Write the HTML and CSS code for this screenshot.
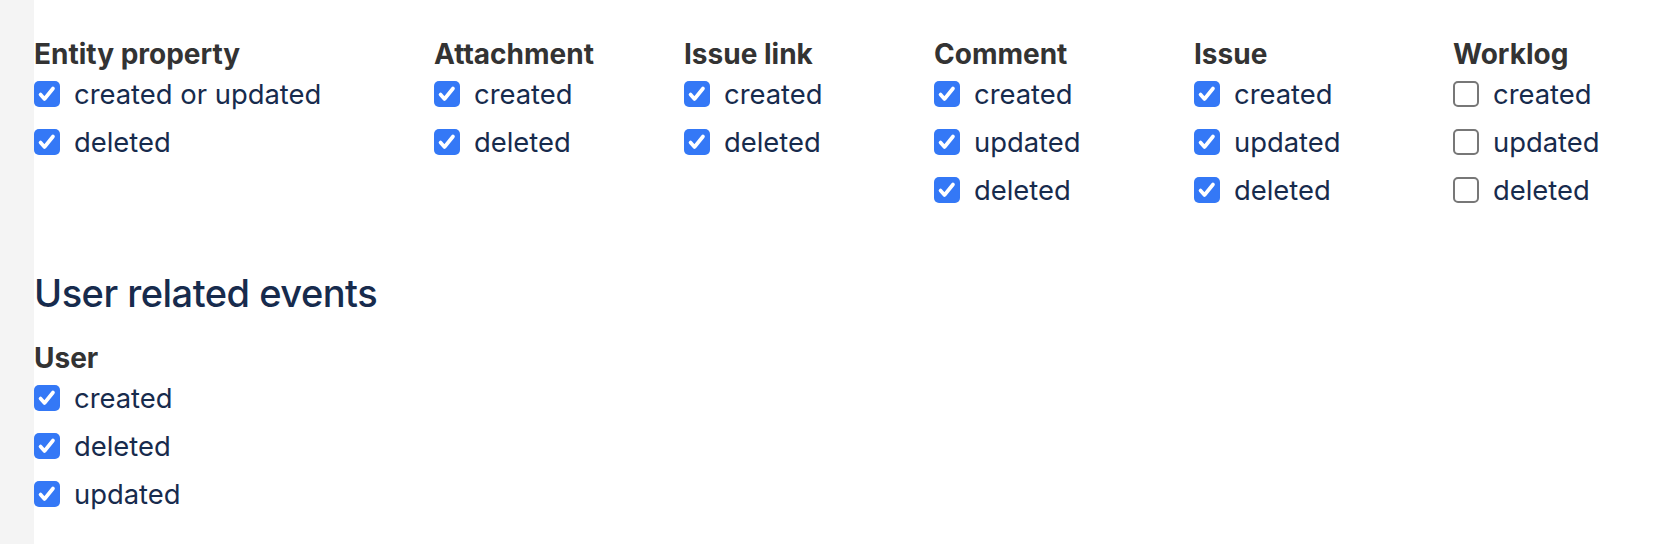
FILE: index.html
```html
<!DOCTYPE html>
<html lang="en">
<head>
<meta charset="utf-8">
<title>Webhook events</title>
<link rel="stylesheet" href="styles.css">
</head>
<body>
<div class="page">
  <aside class="rail"></aside>
  <main class="content">
    <div class="event-grid">
      <section class="group">
        <h5 class="group-title">Entity property</h5>
        <label class="opt"><span class="box on"><svg viewBox="0 0 26 26"><polyline points="6.5,13.5 10.5,18 19,7.5"/></svg></span><span class="lbl">created or updated</span></label>
        <label class="opt"><span class="box on"><svg viewBox="0 0 26 26"><polyline points="6.5,13.5 10.5,18 19,7.5"/></svg></span><span class="lbl">deleted</span></label>
      </section>
      <section class="group">
        <h5 class="group-title">Attachment</h5>
        <label class="opt"><span class="box on"><svg viewBox="0 0 26 26"><polyline points="6.5,13.5 10.5,18 19,7.5"/></svg></span><span class="lbl">created</span></label>
        <label class="opt"><span class="box on"><svg viewBox="0 0 26 26"><polyline points="6.5,13.5 10.5,18 19,7.5"/></svg></span><span class="lbl">deleted</span></label>
      </section>
      <section class="group">
        <h5 class="group-title">Issue link</h5>
        <label class="opt"><span class="box on"><svg viewBox="0 0 26 26"><polyline points="6.5,13.5 10.5,18 19,7.5"/></svg></span><span class="lbl">created</span></label>
        <label class="opt"><span class="box on"><svg viewBox="0 0 26 26"><polyline points="6.5,13.5 10.5,18 19,7.5"/></svg></span><span class="lbl">deleted</span></label>
      </section>
      <section class="group">
        <h5 class="group-title">Comment</h5>
        <label class="opt"><span class="box on"><svg viewBox="0 0 26 26"><polyline points="6.5,13.5 10.5,18 19,7.5"/></svg></span><span class="lbl">created</span></label>
        <label class="opt"><span class="box on"><svg viewBox="0 0 26 26"><polyline points="6.5,13.5 10.5,18 19,7.5"/></svg></span><span class="lbl">updated</span></label>
        <label class="opt"><span class="box on"><svg viewBox="0 0 26 26"><polyline points="6.5,13.5 10.5,18 19,7.5"/></svg></span><span class="lbl">deleted</span></label>
      </section>
      <section class="group">
        <h5 class="group-title">Issue</h5>
        <label class="opt"><span class="box on"><svg viewBox="0 0 26 26"><polyline points="6.5,13.5 10.5,18 19,7.5"/></svg></span><span class="lbl">created</span></label>
        <label class="opt"><span class="box on"><svg viewBox="0 0 26 26"><polyline points="6.5,13.5 10.5,18 19,7.5"/></svg></span><span class="lbl">updated</span></label>
        <label class="opt"><span class="box on"><svg viewBox="0 0 26 26"><polyline points="6.5,13.5 10.5,18 19,7.5"/></svg></span><span class="lbl">deleted</span></label>
      </section>
      <section class="group">
        <h5 class="group-title">Worklog</h5>
        <label class="opt"><span class="box"></span><span class="lbl">created</span></label>
        <label class="opt"><span class="box"></span><span class="lbl">updated</span></label>
        <label class="opt"><span class="box"></span><span class="lbl">deleted</span></label>
      </section>
    </div>

    <h3 class="section-title">User related events</h3>
    <section class="group">
      <h5 class="group-title">User</h5>
      <label class="opt"><span class="box on"><svg viewBox="0 0 26 26"><polyline points="6.5,13.5 10.5,18 19,7.5"/></svg></span><span class="lbl">created</span></label>
      <label class="opt"><span class="box on"><svg viewBox="0 0 26 26"><polyline points="6.5,13.5 10.5,18 19,7.5"/></svg></span><span class="lbl">deleted</span></label>
      <label class="opt"><span class="box on"><svg viewBox="0 0 26 26"><polyline points="6.5,13.5 10.5,18 19,7.5"/></svg></span><span class="lbl">updated</span></label>
    </section>
  </main>
</div>
</body>
</html>
```
FILE: styles.css
```css
* { box-sizing: border-box; }

html, body {
  margin: 0;
  padding: 0;
  background: #ffffff;
}

body {
  font-family: Inter, "Noto Sans", "Liberation Sans", sans-serif;
  color: #172b4d;
}

.page {
  display: flex;
  min-height: 544px;
}

.rail {
  width: 34px;
  flex: 0 0 34px;
  background: #f4f4f4;
}

.content {
  flex: 1;
  padding-top: 38px;
}

.event-grid {
  display: grid;
  grid-template-columns: 400px 250px 250px 260px 259px 1fr;
  align-items: start;
}

.group {
  display: flex;
  flex-direction: column;
}

.group-title {
  margin: 0;
  font-size: 28px;
  line-height: 32px;
  font-weight: 700;
  color: #333333;
}

.opt {
  display: flex;
  align-items: center;
  height: 48px;
}

.box {
  width: 26px;
  height: 26px;
  flex: 0 0 26px;
  border-radius: 5px;
  border: 2px solid #777777;
  background: #ffffff;
  display: flex;
  align-items: center;
  justify-content: center;
}

.box.on {
  border: none;
  background: #3478f6;
}

.box svg {
  width: 26px;
  height: 26px;
  fill: none;
  stroke: #ffffff;
  stroke-width: 3.6;
  stroke-linecap: round;
  stroke-linejoin: round;
}

.lbl {
  margin-left: 14px;
  font-size: 27.4px;
  line-height: 32px;
  color: #172b4d;
}

.section-title {
  margin: 55px 0 25px;
  font-size: 38px;
  line-height: 48px;
  font-weight: 500;
  letter-spacing: -0.5px;
  color: #172b4d;
}
```
